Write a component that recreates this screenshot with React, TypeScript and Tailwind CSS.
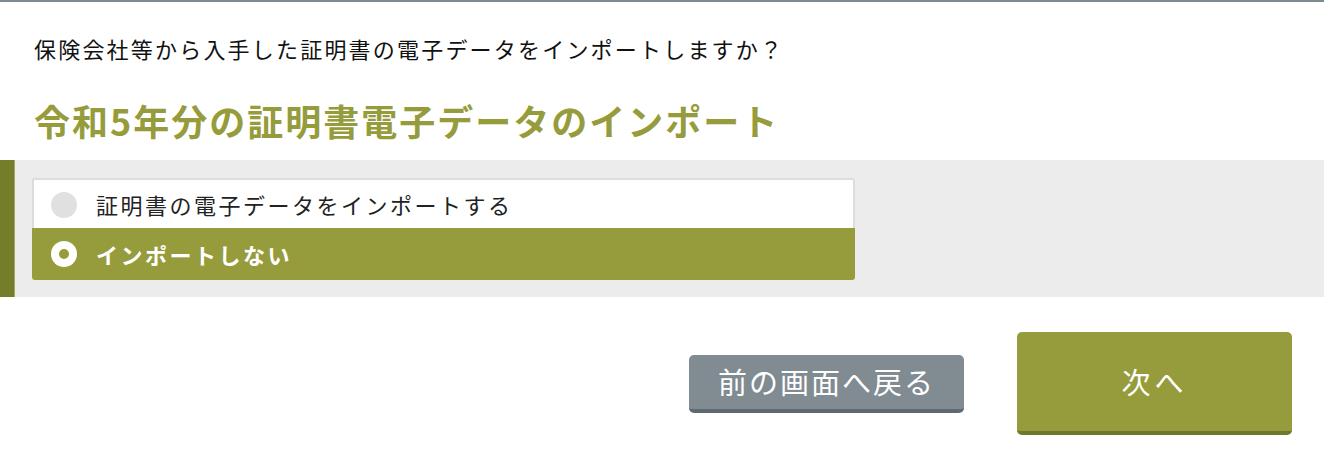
import React from "react";

const jp = { fontFamily: '"Noto Sans CJK JP", "Noto Sans", sans-serif' };

export default function App() {
  return (
    <div className="w-[1324px] h-[471px] bg-white border-t-2 border-[#7d8b91] overflow-hidden" style={jp}>
      <div className="pt-[30px] pl-[34px] text-[22px] leading-[32px] tracking-[2.2px] text-[#111]">
        保険会社等から入手した証明書の電子データをインポートしますか？
      </div>
      <div className="pt-[33px] pl-[34px] text-[36px] leading-[46px] font-bold tracking-[2px] text-[#969c3b]">
        令和5年分の証明書電子データのインポート
      </div>
      <div className="mt-[17px] flex h-[137px] bg-[#ececec]">
        <div className="w-[15px] bg-[#747d2a] border-r border-[#a3a865]" />
        <div className="pl-[17px] pt-[18px]">
          <div className="w-[823px] rounded-[3px] border-2 border-b-0 border-[#dcdcdc] overflow-hidden">
            <div className="flex items-center h-[49px] bg-white">
              <div className="ml-[17px] w-[26px] h-[26px] rounded-full bg-[#e0e0e0]" />
              <span className="ml-[19px] text-[22px] tracking-[2.5px] text-[#222]">証明書の電子データをインポートする</span>
            </div>
          </div>
          <div className="w-[823px] -mt-px flex items-center h-[52px] bg-[#969c3b] rounded-b-[3px]">
            <div className="ml-[19px] w-[26px] h-[26px] rounded-full bg-white flex items-center justify-center">
              <div className="w-[10px] h-[10px] rounded-full bg-[#969c3b]" />
            </div>
            <span className="ml-[19px] text-[22px] font-bold tracking-[2.5px] text-white">インポートしない</span>
          </div>
        </div>
      </div>
      <div className="flex justify-end items-center pr-[32px] mt-[35px] gap-[53px]">
        <button className="w-[275px] h-[58px] rounded-[5px] bg-[#808b92] border-b-[4px] border-[#5f6a70] text-white text-[29px] tracking-[2px] flex items-center justify-center">
          前の画面へ戻る
        </button>
        <button className="w-[275px] h-[103px] rounded-[5px] bg-[#969c3b] border-b-[4px] border-[#6f782b] text-white text-[29px] tracking-[4px] flex items-center justify-center">
          次へ
        </button>
      </div>
    </div>
  );
}
